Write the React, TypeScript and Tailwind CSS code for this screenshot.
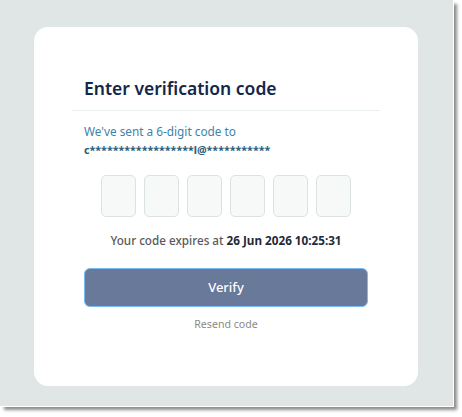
import React from "react";

const font = { fontFamily: '"Noto Sans", "Open Sans", sans-serif' };

function CodeBox() {
  return (
    <input
      maxLength={1}
      className="w-[35px] h-[42px] rounded-[5px] border border-[#dbe3e2] bg-[#f7f8f8] text-center text-lg outline-none"
    />
  );
}

export default function App() {
  return (
    <div className="w-[462px] h-[417px] bg-white" style={font}>
      <div className="w-[453px] h-[406px] bg-[#dfe6e5] pt-[27px] pl-[34px] shadow-[1px_1px_0_#ffffff,4px_4px_3px_rgba(0,0,0,0.45)]">
        <div className="w-[384px] h-[359px] bg-white rounded-[14px] px-[38px] pt-[48px] flex flex-col">
          <div className="pl-3 pb-[8px] border-b border-[#e9eeee]">
            <h1 className="text-[17.5px] leading-[27px] font-semibold text-[#14264a]">
              Enter verification code
            </h1>
          </div>
          <div className="px-3 pt-[12px] flex flex-col">
            <p className="text-[11.8px] leading-[17px] text-[#3c83ab]">
              We've sent a 6-digit code to
            </p>
            <p className="text-[10.7px] leading-[15px] font-bold text-[#285c78] mt-[3px]">
              c******************l@***********
            </p>
            <div className="flex gap-2 justify-center mt-[17px]">
              <CodeBox />
              <CodeBox />
              <CodeBox />
              <CodeBox />
              <CodeBox />
              <CodeBox />
            </div>
            <p className="text-center text-[11.7px] leading-[17px] mt-[15px] text-[#595959] font-medium">
              Your code expires at{" "}
              <span className="font-bold text-[#1f2a3a]">26 Jun 2026 10:25:31</span>
            </p>
            <button className="mt-[19px] h-[39px] w-full rounded-[6px] bg-[#68799a] border border-[#7db9f3] text-white text-[13px] font-medium">
              Verify
            </button>
            <button className="mt-[10px] self-center text-[10.6px] leading-[15px] text-[#8a8a8a]">
              Resend code
            </button>
          </div>
        </div>
      </div>
    </div>
  );
}
